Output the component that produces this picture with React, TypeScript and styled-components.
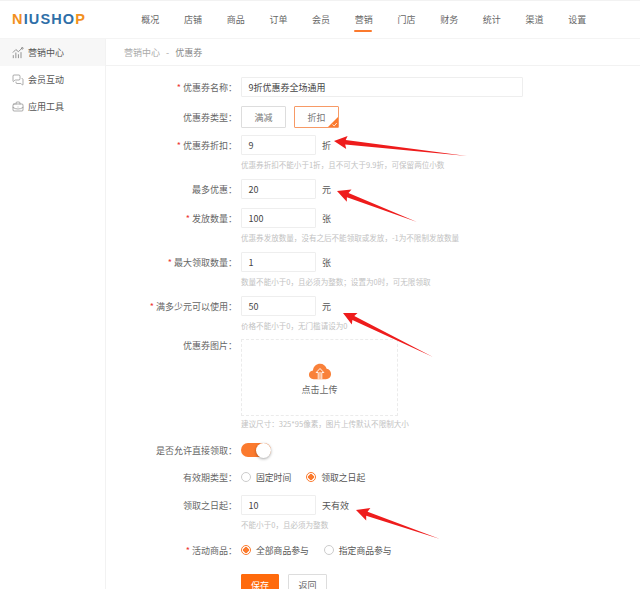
import React from "react";
import styled, { createGlobalStyle } from "styled-components";
import { MessagesSquare, BriefcaseBusiness } from "lucide-react";

const Global = createGlobalStyle`
  html, body { margin: 0; padding: 0; height: 589px; overflow: hidden; background: #fff; }
  body { font-family: "Noto Sans CJK SC", "Liberation Sans", sans-serif; font-size: 9px; color: #555; }
  #root { height: 589px; }
  * { box-sizing: border-box; }
`;
const ORANGE = "#fb7a2e";

const Page = styled.div`position: relative; height: 589px; overflow: hidden; display: flex; flex-direction: column;`;
const Header = styled.header`height: 39px; flex: none; display: flex; align-items: center; border-top: 1px solid #f2f2f2; border-bottom: 1px solid #f4f4f4; padding-left: 12px;`;
const Logo = styled.div`width: 117px; font: 700 14.5px/1 "Liberation Sans", sans-serif; letter-spacing: 1.15px; color: #2f6fa8; margin-top: -1px;`;
const LogoAccent = styled.span`color: #f29020;`;
const Nav = styled.nav`display: flex; height: 100%;`;
const NavItem = styled.div<{ $active?: boolean }>`
  position: relative; width: 42.7px; display: flex; align-items: center; justify-content: center; color: #666; margin-top: -1px;
  ${(p) => p.$active && `&::after { content: ""; position: absolute; left: 12px; width: 18px; bottom: 6px; height: 2px; background: ${ORANGE}; border-radius: 1px; }`}
`;
const Body = styled.div`flex: 1; display: flex; min-height: 0;`;
const Side = styled.aside`width: 106px; flex: none; border-right: 1px solid #f2f2f2;`;
const SideItem = styled.div<{ $active?: boolean }>`
  height: 27px; display: flex; align-items: center; gap: 4px; padding-left: 12px; color: #555; background: ${(p) => (p.$active ? "#f7f7f7" : "#fff")};
  svg { width: 12px; height: 12px; flex: none; color: #777; }
`;
const Main = styled.main`flex: 1; min-width: 0;`;
const Crumb = styled.div`height: 27px; display: flex; align-items: center; gap: 6px; padding-left: 18px; border-bottom: 1px solid #f2f2f2; color: #aaa;`;
const CrumbNow = styled.span`color: #888;`;
const Form = styled.div`padding-top: 11px;`;
const Row = styled.div<{ $gap?: number; $top?: boolean }>`
  display: flex; align-items: ${(p) => (p.$top ? "flex-start" : "center")}; min-height: 20px; margin-bottom: ${(p) => p.$gap ?? 9}px;
`;
const Label = styled.div`width: 135px; padding-right: 4px; flex: none; text-align: right; color: #666; white-space: nowrap;`;
const Star = styled.span`color: #e33; margin-right: 2px;`;
const Input = styled.div<{ $wide?: boolean }>`
  width: ${(p) => (p.$wide ? 282 : 75)}px; height: 20px; display: flex; align-items: center; padding-left: 6.5px; border: 1px solid #eee; border-radius: 1px; color: #444; font-size: 9px;
`;
const Unit = styled.span`margin-left: 6px; color: #555;`;
const Hint = styled.div<{ $gap?: number; $top?: number }>`
  margin: ${(p) => p.$top ?? 3}px 0 ${(p) => p.$gap ?? 7}px 135px; height: 14px; line-height: 14px; font-size: 7.55px; color: #c2c2c2; white-space: nowrap;
`;
const Types = styled.div`display: flex; gap: 8px;`;
const TypeBtn = styled.div<{ $on?: boolean }>`
  position: relative; width: 45px; height: 22px; display: flex; align-items: center; justify-content: center; overflow: hidden; border-radius: 1px;
  border: 1px solid ${(p) => (p.$on ? "#f79a66" : "#ddd")}; color: #777;
`;
const Corner = styled.svg`position: absolute; right: 0; bottom: 0; width: 10px; height: 10px;`;
const Upload = styled.div`width: 157px; height: 77px; border: 1px dashed #ebebeb; display: flex; flex-direction: column; align-items: center; justify-content: center; gap: 3px; color: #666; padding-top: 3px;`;
const Toggle = styled.div`position: relative; width: 30px; height: 14px; border-radius: 7px; background: ${ORANGE};`;
const Knob = styled.div`position: absolute; right: 0; top: -0.5px; width: 15px; height: 15px; border-radius: 50%; background: #fff; box-shadow: 0 1px 3px rgba(0,0,0,.35);`;
const Radios = styled.div`display: flex;`;
const RadioItem = styled.div<{ $gap?: number }>`display: flex; align-items: center; gap: 5px; margin-right: ${(p) => p.$gap ?? 15}px; color: #555; font-size: 8.8px;`;
const Dot = styled.span<{ $on?: boolean }>`
  width: 10px; height: 10px; flex: none; border-radius: 50%; border: 1px solid ${(p) => (p.$on ? ORANGE : "#ccc")};
  background: ${(p) => (p.$on ? `radial-gradient(circle, ${ORANGE} 0 2.6px, #fff 3px)` : "#fff")};
`;
const Buttons = styled.div`display: flex; gap: 9px; margin: 14px 0 0 135px;`;
const Btn = styled.div<{ $primary?: boolean }>`
  width: ${(p) => (p.$primary ? 38 : 39)}px; height: 22px; display: flex; align-items: center; justify-content: center; line-height: 1; border-radius: 1px;
  background: ${(p) => (p.$primary ? "#ff6a0c" : "#fff")}; color: ${(p) => (p.$primary ? "#fff" : "#666")}; border: 1px solid ${(p) => (p.$primary ? "#ff6a0c" : "#ddd")};
`;
const Overlay = styled.svg`position: absolute; inset: 0; width: 640px; height: 589px; pointer-events: none;`;

function arrowPoints(tx: number, ty: number, ex: number, ey: number) {
  const d = Math.hypot(ex - tx, ey - ty);
  const ux = (ex - tx) / d, uy = (ey - ty) / d;
  const nx = -uy, ny = ux;
  const p = (a: number, b: number) => `${(tx + ux * a + nx * b).toFixed(1)},${(ty + uy * a + ny * b).toFixed(1)}`;
  return [p(0, 0), p(13, -6.5), p(11.5, -2.2), p(d, 0), p(11.5, 2.2), p(13, 6.5)].join(" ");
}

const Arrow = ({ a }: { a: number[] }) => <polygon points={arrowPoints(a[0], a[1], a[2], a[3])} fill="#ee1c1c" />;

const ChartIcon = () => (
  <svg viewBox="0 0 14 14" fill="none" stroke="currentColor" strokeWidth="0.9">
    <path d="M1 6.5 4.5 3 7.5 5.5 11.5 1.5" />
    <circle cx="12" cy="1.5" r="1" />
    <path d="M1.5 13V9.5M4.5 13V6.5M7.5 13V8.5M10.5 13V6" />
  </svg>
);

const Req = ({ children }: { children: React.ReactNode }) => (<Label><Star>*</Star>{children}：</Label>);
const Plain = ({ children }: { children: React.ReactNode }) => <Label>{children}：</Label>;

export default function App() {
  return (
    <Page>
      <Global />
      <Header>
        <Logo><LogoAccent>N</LogoAccent>IUSHO<LogoAccent>P</LogoAccent></Logo>
        <Nav>
          {["概况", "店铺", "商品", "订单", "会员", "营销", "门店", "财务", "统计", "渠道", "设置"].map((n) => (
            <NavItem key={n} $active={n === "营销"}>{n}</NavItem>
          ))}
        </Nav>
      </Header>
      <Body>
        <Side>
          <SideItem $active><ChartIcon />营销中心</SideItem>
          <SideItem><MessagesSquare strokeWidth={1.2} />会员互动</SideItem>
          <SideItem><BriefcaseBusiness strokeWidth={1.2} />应用工具</SideItem>
        </Side>
        <Main>
          <Crumb>营销中心<span>-</span><CrumbNow>优惠券</CrumbNow></Crumb>
          <Form>
            <Row><Req>优惠券名称</Req><Input $wide>9折优惠券全场通用</Input></Row>
            <Row $gap={7}><Plain>优惠券类型</Plain>
              <Types>
                <TypeBtn>满减</TypeBtn>
                <TypeBtn $on>折扣
                  <Corner viewBox="0 0 10 10"><path d="M10 0V10H0Z" fill={ORANGE} /><path d="M4.5 7.5 6.2 9 8.8 6" stroke="#fff" strokeWidth=".8" fill="none" /></Corner>
                </TypeBtn>
              </Types>
            </Row>
            <Row $gap={0}><Req>优惠券折扣</Req><Input>9</Input><Unit>折</Unit></Row>
            <Hint>优惠券折扣不能小于1折，且不可大于9.9折，可保留两位小数</Hint>
            <Row><Plain>最多优惠</Plain><Input>20</Input><Unit>元</Unit></Row>
            <Row $gap={0}><Req>发放数量</Req><Input>100</Input><Unit>张</Unit></Row>
            <Hint>优惠券发放数量，没有之后不能领取或发放，-1为不限制发放数量</Hint>
            <Row $gap={0}><Req>最大领取数量</Req><Input>1</Input><Unit>张</Unit></Row>
            <Hint>数量不能小于0，且必须为整数；设置为0时，可无限领取</Hint>
            <Row $gap={0}><Req>满多少元可以使用</Req><Input>50</Input><Unit>元</Unit></Row>
            <Hint $gap={6}>价格不能小于0，无门槛请设为0</Hint>
            <Row $gap={0} $top>
              <Plain>优惠券图片</Plain>
              <Upload>
                <svg width="26" height="17" viewBox="0 0 27 20">
                  <path d="M6 19C2.6 19 .5 16.6.5 13.8.5 11 2.6 9 5.2 8.8 5.8 4 9.4 1 13.6 1c3.8 0 6.8 2.4 7.7 5.8 3 .4 5.2 3 5.2 6.1 0 3.4-2.6 6.1-6 6.1Z" fill="#f9813a" />
                  <path d="M13.5 6.5 9 11.2h2.4V19M13.5 6.5 18 11.2h-2.4V19M13.5 10.5V19" stroke="#fff" strokeWidth="1.1" fill="none" />
                </svg>
                点击上传
              </Upload>
            </Row>
            <Hint $top={1} $gap={9}>建议尺寸：325*95像素，图片上传默认不限制大小</Hint>
            <Row $gap={7}><Plain>是否允许直接领取</Plain><Toggle><Knob /></Toggle></Row>
            <Row $gap={8}><Plain>有效期类型</Plain>
              <Radios>
                <RadioItem><Dot />固定时间</RadioItem>
                <RadioItem><Dot $on />领取之日起</RadioItem>
              </Radios>
            </Row>
            <Row $gap={0}><Plain>领取之日起</Plain><Input>10</Input><Unit>天有效</Unit></Row>
            <Hint $gap={8}>不能小于0，且必须为整数</Hint>
            <Row $gap={0}><Req>活动商品</Req>
              <Radios>
                <RadioItem><Dot $on />全部商品参与</RadioItem>
                <RadioItem><Dot />指定商品参与</RadioItem>
              </Radios>
            </Row>
            <Buttons><Btn $primary>保存</Btn><Btn>返回</Btn></Buttons>
          </Form>
        </Main>
      </Body>
      <Overlay viewBox="0 0 640 589">
        <Arrow a={[334, 141, 467, 156]} />
        <Arrow a={[337, 191, 417, 222]} />
        <Arrow a={[343, 313, 433, 357]} />
        <Arrow a={[356, 510, 440, 539]} />
      </Overlay>
    </Page>
  );
}
